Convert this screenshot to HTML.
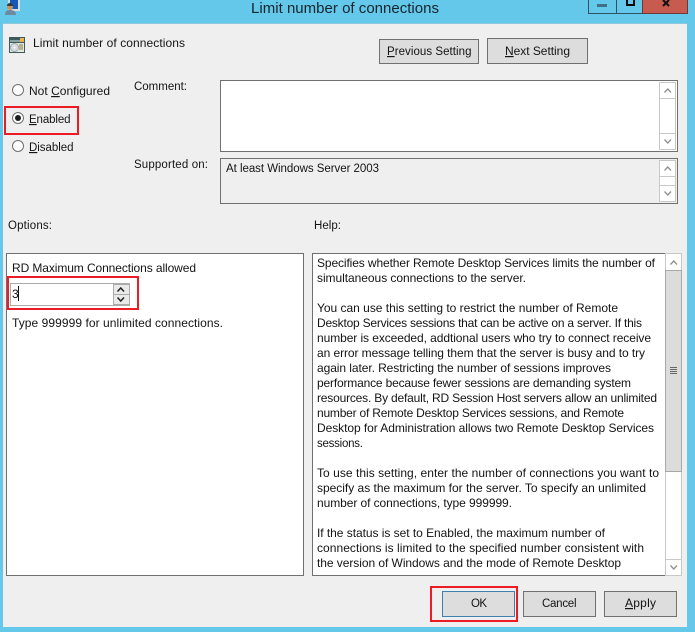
<!DOCTYPE html>
<html>
<head>
<meta charset="utf-8">
<style>
html,body{margin:0;padding:0;width:695px;height:632px;overflow:hidden;background:#63c8ea;}
body{position:relative;font-family:"Liberation Sans",sans-serif;font-size:12px;color:#141414;}
.a{position:absolute;box-sizing:border-box;}
.btn{position:absolute;box-sizing:border-box;background:#dddddd;border:1px solid #707070;}
.sb{position:absolute;box-sizing:border-box;border:1px solid #c8c8c8;background:#fff;}
.radio{position:absolute;box-sizing:border-box;width:12px;height:12px;border:1px solid #707070;border-radius:50%;background:#fff;}
.red{position:absolute;box-sizing:border-box;border:2px solid #ed1c24;}
svg{position:absolute;display:block;overflow:visible;}
svg.txt{left:0;top:0;}
svg.txt text{font-family:"Liberation Sans",sans-serif;font-size:12px;fill:#141414;white-space:pre;}
svg.txt text.s{font-size:11.5px;}
svg.txt tspan.u{text-decoration:underline;}
</style>
</head>
<body>
<!-- title bar -->
<svg style="left:5px;top:0" width="16" height="16" viewBox="0 0 16 16"><rect x="3" y="0" width="12" height="11" fill="#d4dde2"/><rect x="5" y="0" width="8" height="9" fill="#1458b8"/><circle cx="5" cy="7" r="3" fill="#c19463"/><path d="M0 15c0-4 2-5 5-5s6 1 6 5z" fill="#6f8aa0"/><path d="M2 6c0-4 6-4 6 0z" fill="#3a3a3a"/></svg>
<div class="a" style="left:588px;top:-2px;width:100px;height:16px;border:1px solid #2f5264;"></div>
<div class="a" style="left:616px;top:-2px;width:1px;height:16px;background:#2f5264;"></div>
<div class="a" style="left:642px;top:-2px;width:46px;height:16px;background:#c75b50;border:1px solid #6b3a38;"></div>
<div class="a" style="left:597px;top:4px;width:10px;height:3px;background:#3f7186;"></div>
<div class="a" style="left:626px;top:-2px;width:9px;height:8px;border:2px solid #0a0a0a;"></div>
<svg style="left:662px;top:0" width="8" height="7" viewBox="0 0 8 7"><path d="M1 0L7 6M7 0L1 6" stroke="#111" stroke-width="2" fill="none"/></svg>

<!-- client -->
<div class="a" style="left:3px;top:23px;width:684px;height:604px;background:#efefef;border-top:1px solid #8fc7dd;"></div>

<svg style="left:9px;top:37px" width="16" height="16" viewBox="0 0 16 16"><rect x="0" y="0" width="16" height="16" fill="#3d5a5c"/><rect x="1" y="3" width="14" height="2" fill="#8aa3a3"/><rect x="1" y="6" width="14" height="9" fill="#e6e8dc"/><rect x="11" y="1" width="4" height="4" fill="#e9b54a"/><circle cx="5.500" cy="10.500" r="4" fill="#d5dbe0" stroke="#8b9aa5" stroke-width=".7"/><circle cx="5.500" cy="10.500" r="1" fill="#fff"/><path d="M10 8h4M10 10h4M10 12h4" stroke="#8a7a3a" stroke-width="1"/></svg>

<div class="btn" style="left:379px;top:39px;width:100px;height:25px;"></div>
<div class="btn" style="left:487px;top:38px;width:101px;height:26px;"></div>

<!-- radios -->
<div class="radio" style="left:12px;top:84px;"></div>
<div class="radio" style="left:12px;top:112px;"></div>
<div class="a" style="left:15px;top:115px;width:6px;height:6px;border-radius:50%;background:#1c1c1c;"></div>
<div class="radio" style="left:12px;top:140px;"></div>
<div class="red" style="left:4px;top:106px;width:75px;height:29px;"></div>

<!-- comment box -->
<div class="a" style="left:220px;top:80px;width:458px;height:72px;background:#fff;border:1px solid #707070;"></div>
<div class="sb" style="left:659px;top:82px;width:17px;height:68px;"></div>
<div class="sb" style="left:659px;top:82px;width:17px;height:17px;"></div>
<div class="sb" style="left:659px;top:133px;width:17px;height:17px;"></div>
<svg style="left:664px;top:88px" width="8" height="5"><path d="M.5 4.500L3.750 1L7 4.500" stroke="#8f8f8f" stroke-width="1.300" fill="none"/></svg>
<svg style="left:664px;top:139px" width="8" height="5"><path d="M.5 .5L3.750 4L7 .5" stroke="#8f8f8f" stroke-width="1.300" fill="none"/></svg>

<!-- supported box -->
<div class="a" style="left:220px;top:158px;width:458px;height:46px;background:#efefef;border:1px solid #707070;"></div>
<div class="sb" style="left:659px;top:160px;width:17px;height:42px;"></div>
<div class="sb" style="left:659px;top:160px;width:17px;height:17px;"></div>
<div class="sb" style="left:659px;top:185px;width:17px;height:17px;"></div>
<svg style="left:664px;top:166px" width="8" height="5"><path d="M.5 4.500L3.750 1L7 4.500" stroke="#8f8f8f" stroke-width="1.300" fill="none"/></svg>
<svg style="left:664px;top:191px" width="8" height="5"><path d="M.5 .5L3.750 4L7 .5" stroke="#8f8f8f" stroke-width="1.300" fill="none"/></svg>

<!-- options -->
<div class="a" style="left:6px;top:253px;width:298px;height:323px;background:#fff;border:1px solid #707070;"></div>
<div class="a" style="left:10px;top:283px;width:120px;height:23px;background:#fff;border:1px solid #ababab;"></div>
<div class="a" style="left:113px;top:284px;width:16px;height:21px;background:#ababab;"></div>
<div class="a" style="left:114px;top:285px;width:15px;height:9px;background:#eaeaea;"></div>
<div class="a" style="left:114px;top:295px;width:15px;height:9px;background:#eaeaea;"></div>
<svg style="left:117px;top:287px" width="8" height="5"><path d="M.5 4.500L3.750 1L7 4.500" stroke="#222" stroke-width="1.500" fill="none"/></svg>
<svg style="left:117px;top:297px" width="8" height="5"><path d="M.5 .5L3.750 4L7 .5" stroke="#222" stroke-width="1.500" fill="none"/></svg>
<div class="a" style="left:18px;top:286px;width:1px;height:15px;background:#111;"></div>
<div class="red" style="left:7px;top:276px;width:132px;height:34px;"></div>

<!-- help -->
<div class="a" style="left:312px;top:253px;width:354px;height:323px;background:#fff;border:1px solid #707070;"></div>

<!-- help scrollbar -->
<div class="sb" style="left:665px;top:253px;width:17px;height:323px;"></div>
<div class="sb" style="left:665px;top:253px;width:17px;height:18px;"></div>
<div class="sb" style="left:665px;top:270px;width:17px;height:202px;background:#dcdcdc;border-color:#a8a8a8;"></div>
<div class="sb" style="left:665px;top:559px;width:17px;height:17px;"></div>
<svg style="left:670px;top:260px" width="8" height="5"><path d="M.5 4.500L3.750 1L7 4.500" stroke="#8f8f8f" stroke-width="1.300" fill="none"/></svg>
<svg style="left:670px;top:565px" width="8" height="5"><path d="M.5 .5L3.750 4L7 .5" stroke="#8f8f8f" stroke-width="1.300" fill="none"/></svg>
<div class="a" style="left:670px;top:367px;width:7px;height:1px;background:#666;"></div>
<div class="a" style="left:670px;top:369px;width:7px;height:1px;background:#666;"></div>
<div class="a" style="left:670px;top:371px;width:7px;height:1px;background:#666;"></div>
<div class="a" style="left:670px;top:373px;width:7px;height:1px;background:#666;"></div>

<!-- bottom buttons -->
<div class="btn" style="left:442px;top:591px;width:73px;height:26px;border-color:#3c7fb1;"></div>
<div class="btn" style="left:523px;top:591px;width:73px;height:26px;"></div>
<div class="btn" style="left:604px;top:591px;width:73px;height:26px;"></div>
<div class="red" style="left:430px;top:586px;width:88px;height:36px;"></div>

<!-- all text, widths fitted to the reference -->
<svg class="txt" width="695" height="632" viewBox="0 0 695 632">
<text x="251" y="13" textLength="188" style="font-size:15px;fill:#16242c">Limit number of connections</text>
<text x="33" y="47" textLength="152">Limit number of connections</text>
<text class="s" x="387" y="55" textLength="84.500"><tspan class="u">P</tspan>revious Setting</text>
<text x="505" y="55" textLength="65"><tspan class="u">N</tspan>ext Setting</text>
<text x="29" y="95" textLength="81">Not <tspan class="u">C</tspan>onfigured</text>
<text class="s" x="29" y="123" textLength="41.500"><tspan class="u">E</tspan>nabled</text>
<text class="s" x="29" y="151" textLength="44.500"><tspan class="u">D</tspan>isabled</text>
<text class="s" x="134" y="90" textLength="53">Comment:</text>
<text class="s" x="134" y="168" textLength="74">Supported on:</text>
<text class="s" x="226" y="172" textLength="153">At least Windows Server 2003</text>
<text class="s" x="8" y="229" textLength="44">Options:</text>
<text class="s" x="314" y="229" textLength="27">Help:</text>
<text x="12" y="272" textLength="184">RD Maximum Connections allowed</text>
<text x="12" y="298">3</text>
<text x="12" y="327" textLength="211">Type 999999 for unlimited connections.</text>
<text x="317" y="267" textLength="338">Specifies whether Remote Desktop Services limits the number of</text>
<text x="317" y="282" textLength="209">simultaneous connections to the server.</text>
<text x="317" y="312" textLength="301">You can use this setting to restrict the number of Remote</text>
<text x="317" y="327" textLength="325">Desktop Services sessions that can be active on a server. If this</text>
<text x="317" y="342" textLength="334">number is exceeded, addtional users who try to connect receive</text>
<text x="317" y="357" textLength="328">an error message telling them that the server is busy and to try</text>
<text x="317" y="372" textLength="294">again later. Restricting the number of sessions improves</text>
<text x="317" y="387" textLength="314">performance because fewer sessions are demanding system</text>
<text x="317" y="402" textLength="340">resources. By default, RD Session Host servers allow an unlimited</text>
<text x="317" y="417" textLength="307">number of Remote Desktop Services sessions, and Remote</text>
<text x="317" y="432" textLength="337">Desktop for Administration allows two Remote Desktop Services</text>
<text class="s" x="317" y="447" textLength="46">sessions.</text>
<text x="317" y="477" textLength="342">To use this setting, enter the number of connections you want to</text>
<text x="317" y="492" textLength="329">specify as the maximum for the server. To specify an unlimited</text>
<text x="317" y="507" textLength="195">number of connections, type 999999.</text>
<text x="317" y="537" textLength="288">If the status is set to Enabled, the maximum number of</text>
<text x="317" y="552" textLength="327">connections is limited to the specified number consistent with</text>
<text x="317" y="567" textLength="304">the version of Windows and the mode of Remote Desktop</text>
<text class="s" x="471" y="607" textLength="16">OK</text>
<text class="s" x="542" y="607" textLength="34.500">Cancel</text>
<text x="625" y="607" textLength="31"><tspan class="u">A</tspan>pply</text>
</svg>
</body>
</html>
